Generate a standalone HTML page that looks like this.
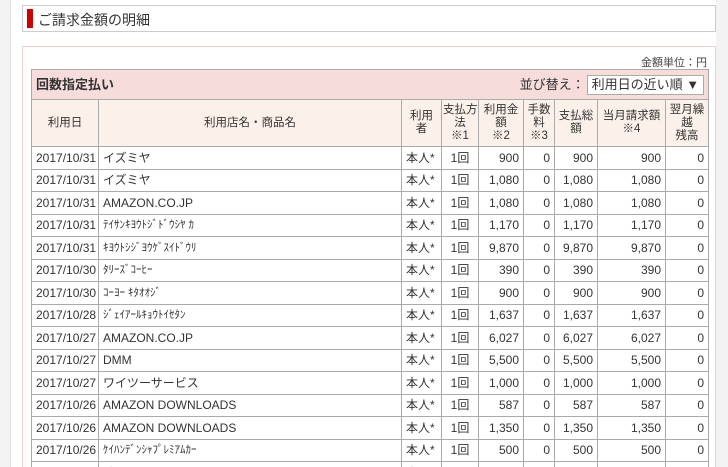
<!DOCTYPE html>
<html><head><meta charset="utf-8"><style>
*{margin:0;padding:0;box-sizing:border-box}
html,body{width:728px;height:467px;overflow:hidden}
body{background:#f3f3f3;font-family:"Liberation Sans","Noto Sans CJK JP",sans-serif;font-size:12px;color:#333;position:relative}
.left{position:absolute;left:10px;top:0;width:706px;height:467px;background:#fff;border-left:1px solid #e0e0e0}
.hd{position:absolute;left:22px;top:5px;width:694px;height:27px;border:1px solid #ccc;background:#fff}
.hd .bar{position:absolute;left:4px;top:3px;width:6px;height:19px;background:#c00}
.hd span{position:absolute;left:15px;top:4px;font-size:14px;color:#333}
.box{position:absolute;left:22px;top:46px;width:694px;height:430px;border:1px solid #efcfcf;background:#fff}
.unit{position:absolute;right:8px;top:7px;font-size:11px;color:#444}
table{position:absolute;left:8px;top:22px;border-collapse:collapse;width:677px;table-layout:fixed}
td,th{border:1px solid #aaa;font-weight:normal;font-size:12px;height:22.5px;line-height:14px;padding:0 4px;white-space:nowrap;overflow:hidden}
.t td{background:#f7dcdc;height:30px;line-height:28px;font-weight:bold;font-size:13px;padding-left:4px;vertical-align:middle}
.sel{float:right;font-weight:normal;font-size:13px;line-height:28px}
.sel span{display:inline-block;border:1px solid #aaa;background:#fff;padding:0 4px;margin-left:2px;font-size:13px;height:20px;line-height:18px;vertical-align:middle}
th{background:#fcf1ea;height:47px;text-align:center;font-size:11.5px;line-height:13px;padding:0 1px}
td.r{text-align:right}
td.c{text-align:center}
.hw{font-size:11px}
</style></head><body>
<div class="left"></div>
<div class="hd"><div class="bar"></div><span>ご請求金額の明細</span></div>
<div class="box">
<div class="unit">金額単位：円</div>
<table>
<colgroup><col style="width:67px"><col style="width:303px"><col style="width:40px"><col style="width:37px"><col style="width:45px"><col style="width:31px"><col style="width:43px"><col style="width:68px"><col style="width:43px"></colgroup>
<tr class="t"><td colspan="9">回数指定払い<div class="sel">並び替え：<span>利用日の近い順 ▼</span></div></td></tr>
<tr><th>利用日</th><th>利用店名・商品名</th><th>利用<br>者</th><th>支払方<br>法<br>※1</th><th>利用金<br>額<br>※2</th><th>手数<br>料<br>※3</th><th>支払総<br>額</th><th>当月請求額<br>※4</th><th>翌月繰<br>越<br>残高</th></tr>
<tr><td>2017/10/31</td><td>イズミヤ</td><td>本人*</td><td class="c">1回</td><td class="r">900</td><td class="r">0</td><td class="r">900</td><td class="r">900</td><td class="r">0</td></tr>
<tr><td>2017/10/31</td><td>イズミヤ</td><td>本人*</td><td class="c">1回</td><td class="r">1,080</td><td class="r">0</td><td class="r">1,080</td><td class="r">1,080</td><td class="r">0</td></tr>
<tr><td>2017/10/31</td><td>AMAZON.CO.JP</td><td>本人*</td><td class="c">1回</td><td class="r">1,080</td><td class="r">0</td><td class="r">1,080</td><td class="r">1,080</td><td class="r">0</td></tr>
<tr><td>2017/10/31</td><td class="hw">ﾃｲｻﾝｷﾖｳﾄｼﾞﾄﾞｳｼﾔ ｶ</td><td>本人*</td><td class="c">1回</td><td class="r">1,170</td><td class="r">0</td><td class="r">1,170</td><td class="r">1,170</td><td class="r">0</td></tr>
<tr><td>2017/10/31</td><td class="hw">ｷﾖｳﾄｼｼﾞﾖｳｹﾞｽｲﾄﾞｳﾘ</td><td>本人*</td><td class="c">1回</td><td class="r">9,870</td><td class="r">0</td><td class="r">9,870</td><td class="r">9,870</td><td class="r">0</td></tr>
<tr><td>2017/10/30</td><td class="hw">ﾀﾘｰｽﾞｺｰﾋｰ</td><td>本人*</td><td class="c">1回</td><td class="r">390</td><td class="r">0</td><td class="r">390</td><td class="r">390</td><td class="r">0</td></tr>
<tr><td>2017/10/30</td><td class="hw">ｺｰﾖｰ ｷﾀｵｵｼﾞ</td><td>本人*</td><td class="c">1回</td><td class="r">900</td><td class="r">0</td><td class="r">900</td><td class="r">900</td><td class="r">0</td></tr>
<tr><td>2017/10/28</td><td class="hw">ｼﾞｪｲｱｰﾙｷｮｳﾄｲｾﾀﾝ</td><td>本人*</td><td class="c">1回</td><td class="r">1,637</td><td class="r">0</td><td class="r">1,637</td><td class="r">1,637</td><td class="r">0</td></tr>
<tr><td>2017/10/27</td><td>AMAZON.CO.JP</td><td>本人*</td><td class="c">1回</td><td class="r">6,027</td><td class="r">0</td><td class="r">6,027</td><td class="r">6,027</td><td class="r">0</td></tr>
<tr><td>2017/10/27</td><td>DMM</td><td>本人*</td><td class="c">1回</td><td class="r">5,500</td><td class="r">0</td><td class="r">5,500</td><td class="r">5,500</td><td class="r">0</td></tr>
<tr><td>2017/10/27</td><td>ワイツーサービス</td><td>本人*</td><td class="c">1回</td><td class="r">1,000</td><td class="r">0</td><td class="r">1,000</td><td class="r">1,000</td><td class="r">0</td></tr>
<tr><td>2017/10/26</td><td>AMAZON DOWNLOADS</td><td>本人*</td><td class="c">1回</td><td class="r">587</td><td class="r">0</td><td class="r">587</td><td class="r">587</td><td class="r">0</td></tr>
<tr><td>2017/10/26</td><td>AMAZON DOWNLOADS</td><td>本人*</td><td class="c">1回</td><td class="r">1,350</td><td class="r">0</td><td class="r">1,350</td><td class="r">1,350</td><td class="r">0</td></tr>
<tr><td>2017/10/26</td><td class="hw">ｹｲﾊﾝﾃﾞﾝｼｬﾌﾟﾚﾐｱﾑｶｰ</td><td>本人*</td><td class="c">1回</td><td class="r">500</td><td class="r">0</td><td class="r">500</td><td class="r">500</td><td class="r">0</td></tr>
<tr><td>2017/10/26</td><td>ﾄﾞﾄ</td><td>本人*</td><td class="c">1回</td><td class="r">500</td><td class="r">0</td><td class="r">500</td><td class="r">500</td><td class="r">0</td></tr>
</table>
</div>
</body></html>
